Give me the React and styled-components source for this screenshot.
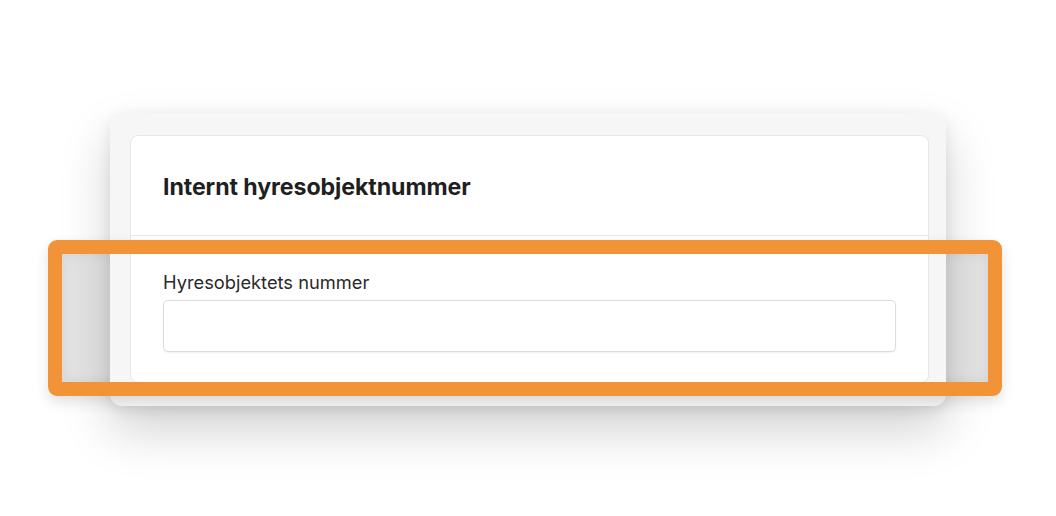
import React from "react";
import styled, { createGlobalStyle } from "styled-components";

const Global = createGlobalStyle`
  html, body { margin: 0; padding: 0; background: #ffffff; }
  body { font-family: Inter, "Noto Sans", "Liberation Sans", sans-serif; color: #222; }
  * { box-sizing: border-box; }
`;

const Stage = styled.div`
  position: relative;
  width: 1056px;
  height: 516px;
  overflow: hidden;
  padding: 113px 0 0 110px;
`;

const Panel = styled.section`
  position: relative;
  z-index: 1;
  width: 836px;
  padding: 22px 17px 23px 20px;
  background: #f6f6f6;
  border-radius: 12px;
  box-shadow: 0 24px 50px rgba(0, 0, 0, 0.18), 0 4px 14px rgba(0, 0, 0, 0.08);
`;

const Card = styled.div`
  background: #ffffff;
  border: 1px solid #e7e7e7;
  border-radius: 8px;
`;

const CardHeader = styled.header`
  height: 100px;
  display: flex;
  align-items: center;
  padding: 0 32px;
  border-bottom: 1px solid #e7e7e7;
`;

const Title = styled.h2`
  margin: 0;
  font-size: 23.2px;
  font-weight: 700;
  color: #1f1f1f;
  letter-spacing: -0.1px;
  line-height: 28px;
  padding-top: 2px;
`;

const CardBody = styled.div`
  display: flex;
  flex-direction: column;
  gap: 7px;
  padding: 35px 32px 30px;
`;

const Label = styled.label`
  font-size: 18.3px;
  color: #2a2a2a;
  line-height: 22px;
`;

const Input = styled.input`
  height: 52px;
  width: 100%;
  border: 1px solid #dcdcdc;
  border-radius: 5px;
  background: #fff;
  box-shadow: 0 1px 2px rgba(0, 0, 0, 0.06);
  font: inherit;
  padding: 0 12px;
  outline: none;
`;

const Shade = styled.div`
  position: absolute;
  z-index: 0;
  left: 62px;
  top: 254px;
  width: 926px;
  height: 128px;
  background: #e4e4e4;
  box-shadow: inset 0 0 14px rgba(0, 0, 0, 0.07);
`;

const Frame = styled.div`
  position: absolute;
  z-index: 2;
  left: 48px;
  top: 240px;
  width: 954px;
  height: 156px;
  border: 14px solid #f19336;
  border-radius: 9px;
  box-shadow: 0 6px 14px rgba(0, 0, 0, 0.12);
  pointer-events: none;
`;

export default function App() {
  return (
    <>
      <Global />
      <Stage>
        <Shade />
        <Panel>
          <Card>
            <CardHeader>
              <Title>Internt hyresobjektnummer</Title>
            </CardHeader>
            <CardBody>
              <Label htmlFor="nr">Hyresobjektets nummer</Label>
              <Input id="nr" type="text" />
            </CardBody>
          </Card>
        </Panel>
        <Frame />
      </Stage>
    </>
  );
}
